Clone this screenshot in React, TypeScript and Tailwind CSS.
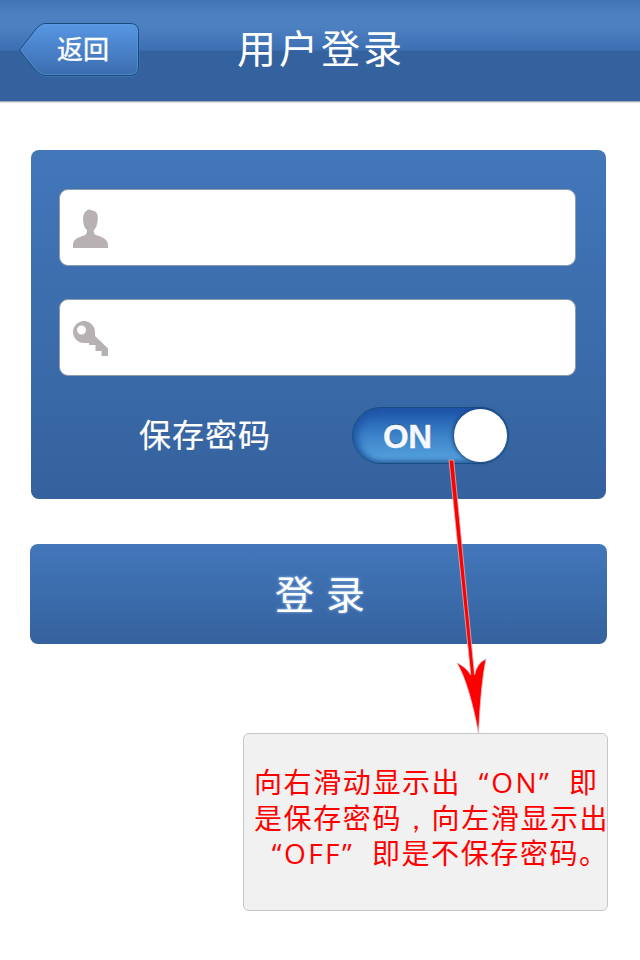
import type { ReactNode } from "react";

function BackButton() {
  return (
    <button className="relative h-[56px] w-[122px] text-white" aria-label="返回">
      <svg className="block" width="122" height="56" viewBox="0 0 122 56" fill="none">
        <defs>
          <linearGradient id="back" x1="0" y1="0" x2="0" y2="1">
            <stop offset="0" stopColor="#5897e4" />
            <stop offset="1" stopColor="#3c6cae" />
          </linearGradient>
        </defs>
        <path d="M2 29.5C9 21 17 10 21 6Q24 3 28 3H113Q121 3 121 11V46Q121 54.500 113 54.500H28Q24 54.500 21 52C17 48 9 38 2 29.500Z" stroke="#6297ca" strokeOpacity=".3" />
        <path d="M1.500 28C8 20.500 16 9 20 5Q23.500 1.500 27 1.500H112Q120.500 1.500 120.500 9.500V45.500Q120.500 53.500 112 53.500H27Q23.500 53.500 20 50.500C16 47 8 36.500 1.500 28Z" fill="url(#back)" stroke="#174a7d" />
        <path d="M3 28C9 21 17 10 21 5.500Q24 2.500 27 2.500H112Q119.500 2.500 119.500 9.500V45.500Q119.500 52.500 112 52.500H27Q24 52.500 21 50C17 46.500 9 36 3 28Z" stroke="#5aa5e0" strokeOpacity=".45" />
      </svg>
      <span className="absolute left-[39px] top-[8px] whitespace-nowrap text-[26px] leading-[36px] [-webkit-text-stroke:0.4px_white]">返回</span>
    </button>
  );
}

function Field({ children, label }: { children: ReactNode; label: string }) {
  return (
    <label className="flex h-[77px] w-[517px] items-center rounded-[9px] border border-[#8f9cac] bg-white pl-[13px] pt-[3px]">
      {children}
      <input aria-label={label} className="min-w-0 flex-1 bg-transparent outline-none" />
    </label>
  );
}

function Toggle() {
  return (
    <div className="flex h-[57px] w-[157px] items-center rounded-full border border-[#174e80] bg-linear-to-b from-[#1d53aa] via-[#3c82c8] via-50% to-[#57a5df] pl-[30px] shadow-[inset_4px_2px_9px_#2054a5,inset_0_-2px_4px_#34659e]">
      <span className="w-[71px] pt-[2px] font-['Liberation_Sans',sans-serif] text-[33px] font-bold leading-[52px] tracking-[-0.5px] text-[#f4f9ff] [-webkit-text-stroke:0.4px_#f4f9ff] [text-shadow:0_-1px_1px_#274f84]">ON</span>
      <span className="size-[53px] rounded-full bg-white shadow-[-1px_0_4px_#183c70]" />
    </div>
  );
}

function Latin({ children }: { children: ReactNode }) {
  return <span className="font-['Open_Sans',sans-serif] tracking-[2.4px]">{children}</span>;
}

function OpenQuote() {
  return <span className="inline-block w-[30px] pr-[1px] text-right font-['Open_Sans',sans-serif] leading-none">“</span>;
}

function CloseQuote() {
  return <span className="inline-block w-[30px] font-['Open_Sans',sans-serif] leading-none">”</span>;
}

export default function App() {
  return (
    <main className="relative h-[960px] w-[640px] overflow-hidden bg-white font-['Noto_Sans_CJK_SC',sans-serif]">
      <header className="grid h-[103px] grid-cols-[238px_1fr] bg-[linear-gradient(#4073b2_0px,#4c80c1_14px,#4c80c1_27px,#3c70b3_50px,#34629e_51px,#34629e_101px,#a2a8b2_101px,#a2a8b2_102px,#e2e2e4_102px)]">
        <div className="pl-[18px] pt-[22px]"><BackButton /></div>
        <h1 className="-ml-px pt-[17px] text-[39px] leading-[58px] tracking-[3px] text-white">用户登录</h1>
      </header>

      <section className="ml-[31px] mt-[47px] flex h-[349px] w-[575px] flex-col rounded-[8px] bg-linear-to-b from-[#4277ba] to-[#35629e] pl-[28px] pt-[39px]">
        <Field label="用户名">
          <svg width="36" height="40" viewBox="0 0 36 40" fill="#b7b1b3">
            <path d="M0 39V35C1 29 7 28 12 26Q14 25 14 21Q11 19 10.500 14Q9 7 12 3Q16-1 19 1.500C24 2 25.500 5 24.500 13Q24 18 21 21Q20 25 23 26C29 28 35 30 35 36V39Z" />
          </svg>
        </Field>
        <div className="h-[33px] shrink-0" />
        <Field label="密码">
          <svg width="36" height="36" viewBox="0 0 36 36" fill="#b7b1b3" fillRule="evenodd">
            <path d="M11 0C17 0 22 5 22 11V15L35 27.500V35H28.500V30H22.500V24H16V22H11C5 22 0 17 0 11S5 0 11 0ZM8.500 4.500A4.500 4.500 0 1 0 8.500 13.500A4.500 4.500 0 0 0 8.500 4.500Z" />
          </svg>
        </Field>
        <div className="mt-[31px] flex h-[57px] items-center pl-[80px]">
          <span className="w-[213px] pb-[5px] text-[32px] leading-[52px] tracking-[1px] text-white [-webkit-text-stroke:0.2px_white]">保存密码</span>
          <Toggle />
        </div>
      </section>

      <button className="ml-[30px] mt-[45px] flex h-[100px] w-[577px] items-center rounded-[8px] bg-linear-to-b from-[#4277ba] to-[#35629e] pb-[4px] pl-[245px] text-[39px] leading-[60px] text-white [text-shadow:0_0_3px_#a4c7f4]">
        <span className="mr-[12px]">登</span><span>录</span>
      </button>

      <aside className="ml-[243px] mt-[89px] h-[178px] w-[365px] whitespace-nowrap rounded-[6px] border border-[#c6c6c6] bg-[#f1f1f1] pl-[10px] pt-[30px] text-[28px] leading-[35px] tracking-[1.6px] text-[#ff0000]">
        <p>向右滑动显示出<OpenQuote /><Latin>ON</Latin><CloseQuote />即</p>
        <p>是保存密码<span className="inline-block w-[29.6px] text-center font-['Open_Sans',sans-serif] leading-none">，</span>向左滑显示出</p>
        <p><OpenQuote /><Latin>OFF</Latin><CloseQuote />即是不保存密码。</p>
      </aside>

      <svg className="pointer-events-none absolute left-[440px] top-[455px]" width="60" height="285" viewBox="0 0 60 285">
        <path d="M9 5H13.700L34.500 220Q37 208 46 204Q41 227 38.500 278Q29 228 17 208Q26 212 30.800 220Z" fill="#ff0000" stroke="#d5b9bd" strokeWidth="0.8" />
      </svg>
    </main>
  );
}
